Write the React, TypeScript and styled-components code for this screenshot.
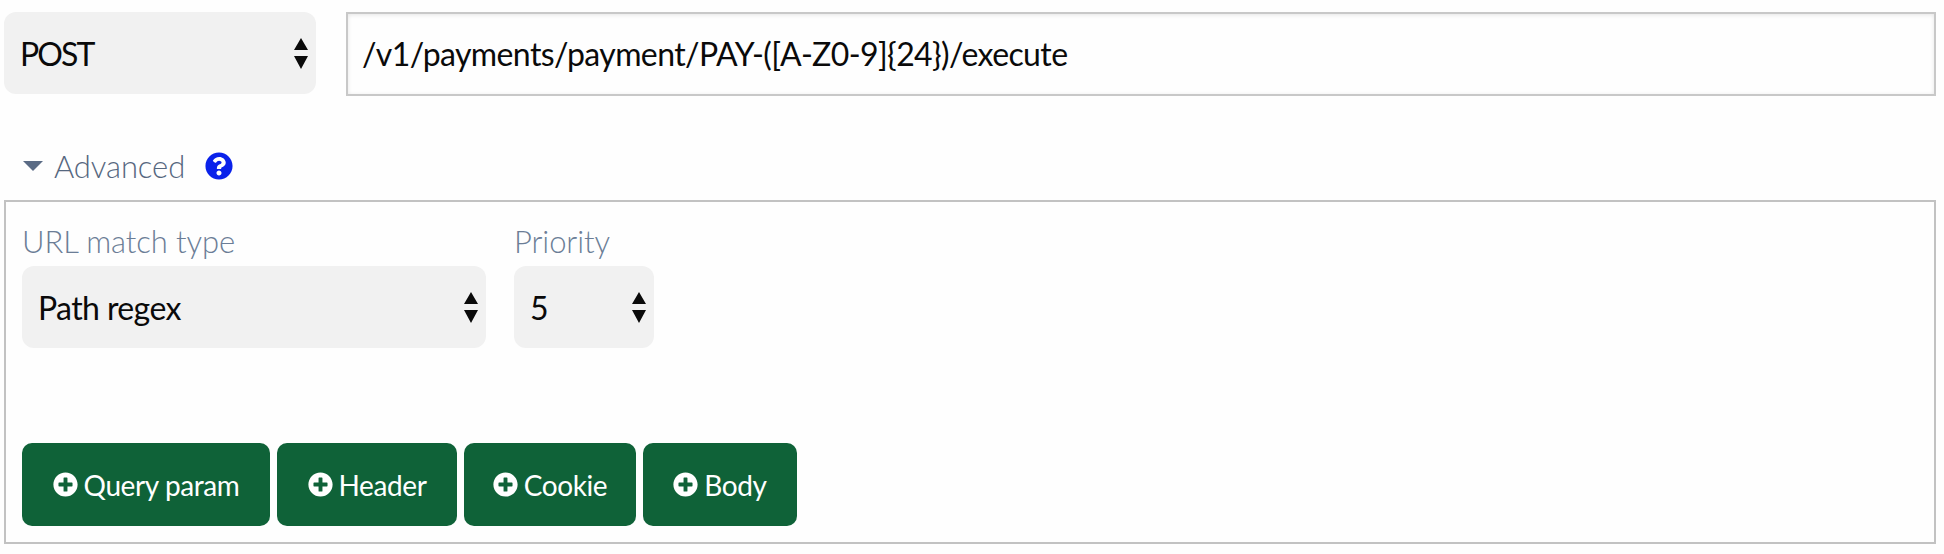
import styled, { createGlobalStyle } from "styled-components";

const GlobalStyle = createGlobalStyle`
  html, body {
    margin: 0;
    background: #fefefe;
  }
  body {
    font-family: "Lato", "Noto Sans", sans-serif;
  }
`;

const Page = styled.div`
  width: 1944px;
  height: 554px;
  box-sizing: border-box;
  padding: 12px 8px 0 4px;
`;

const TopRow = styled.div`
  display: flex;
  align-items: flex-start;
  gap: 30px;
`;

const SelectWrap = styled.div<{ $w: number }>`
  position: relative;
  width: ${(p) => p.$w}px;
  height: 82px;
  flex: none;
  svg {
    position: absolute;
    right: 7px;
    top: 26px;
    pointer-events: none;
  }
`;

const Select = styled.select<{ $spacing: number }>`
  appearance: none;
  width: 100%;
  height: 100%;
  border: none;
  outline: none;
  border-radius: 12px;
  background: #f1f1f1;
  color: #0a0a0a;
  font-family: inherit;
  font-size: 32px;
  letter-spacing: ${(p) => p.$spacing}px;
  padding: 0 0 0 16px;
`;

const UrlInput = styled.input`
  flex: 1;
  min-width: 0;
  height: 84px;
  box-sizing: border-box;
  border: 2px solid #c8c8c8;
  box-shadow: inset 0 1px 4px rgba(10, 10, 10, 0.1);
  background: #fefefe;
  outline: none;
  color: #0a0a0a;
  font-family: inherit;
  font-size: 32px;
  letter-spacing: -0.6px;
  padding: 0 16px 2px 14px;
`;

const Toggle = styled.div`
  display: flex;
  align-items: center;
  height: 40px;
  margin: 50px 0 14px 19px;
`;

const Caret = styled.span`
  width: 0;
  height: 0;
  border-left: 10px solid transparent;
  border-right: 10px solid transparent;
  border-top: 10px solid #5a6b85;
  margin-right: 11px;
`;

const ToggleText = styled.span`
  color: #56677f;
  font-size: 31px;
  font-weight: 300;
  letter-spacing: -0.1px;
  margin-right: 20px;
`;

const Panel = styled.div`
  box-sizing: border-box;
  height: 344px;
  border: 2px solid #c2c2c2;
  padding: 24px 16px 16px 16px;
  display: flex;
  flex-direction: column;
  justify-content: space-between;
`;

const Fields = styled.div`
  display: flex;
  gap: 28px;
`;

const Field = styled.div`
  display: flex;
  flex-direction: column;
`;

const Label = styled.label`
  color: #6b7d96;
  font-size: 31px;
  font-weight: 300;
  letter-spacing: -0.1px;
  line-height: 30px;
  margin-bottom: 10px;
`;

const Buttons = styled.div`
  display: flex;
  gap: 7px;
`;

const Button = styled.button<{ $w: number }>`
  display: flex;
  align-items: center;
  justify-content: center;
  gap: 6px;
  width: ${(p) => p.$w}px;
  height: 83px;
  border: none;
  border-radius: 10px;
  background: #0f6238;
  color: #ffffff;
  font-family: inherit;
  font-size: 28px;
  letter-spacing: -0.4px;
  padding: 0;
`;

const Arrows = () => (
  <svg width="16" height="31" viewBox="0 0 16 31">
    <path d="M8 0 L15 12 L1 12 Z M1 18 L15 18 L8 31 Z" fill="#0a0a0a" />
  </svg>
);

const HelpIcon = () => (
  <svg width="28" height="28" viewBox="0 0 512 512">
    <path
      fill="#0a22ea"
      d="M504 256c0 137-111 248-248 248S8 393 8 256 119 8 256 8s248 111 248 248zM262.700 90c-54.500 0-89.300 23-116.600 63.800-3.500 5.300-2.400 12.400 2.700 16.300l34.700 26.300c5.200 3.900 12.600 3 16.700-2.100 17.900-22.700 30.100-35.800 57.300-35.800 20.400 0 45.700 13.100 45.700 32.900 0 14.900-12.300 22.600-32.400 33.900-23.400 13.100-54.400 29.500-54.400 70.400V300c0 6.600 5.400 12 12 12h56c6.600 0 12-5.400 12-12v-1.300c0-28.400 82.900-29.500 82.900-106.300 0-57.800-60-102.400-116.600-102.400zM256 338c-25.400 0-46 20.600-46 46 0 25.400 20.600 46 46 46s46-20.600 46-46c0-25.400-20.600-46-46-46z"
    />
  </svg>
);

const PlusIcon = () => (
  <svg width="25" height="25" viewBox="0 0 512 512">
    <path
      fill="#ffffff"
      d="M256 8C119 8 8 119 8 256s111 248 248 248 248-111 248-248S393 8 256 8zm144 276c0 6.600-5.400 12-12 12h-92v92c0 6.600-5.400 12-12 12h-56c-6.600 0-12-5.400-12-12v-92h-92c-6.600 0-12-5.400-12-12v-56c0-6.600 5.400-12 12-12h92v-92c0-6.600 5.400-12 12-12h56c6.600 0 12 5.400 12 12v92h92c6.600 0 12 5.400 12 12v56z"
    />
  </svg>
);

const actions = [
  { label: "Query param", w: 248 },
  { label: "Header", w: 180 },
  { label: "Cookie", w: 172 },
  { label: "Body", w: 154 },
];

export default function App() {
  return (
    <Page>
      <GlobalStyle />
      <TopRow>
        <SelectWrap $w={312}>
          <Select $spacing={-1.9} defaultValue="POST">
            <option>GET</option>
            <option>POST</option>
          </Select>
          <Arrows />
        </SelectWrap>
        <UrlInput readOnly value="/v1/payments/payment/PAY-([A-Z0-9]{24})/execute" />
      </TopRow>
      <Toggle>
        <Caret />
        <ToggleText>Advanced</ToggleText>
        <HelpIcon />
      </Toggle>
      <Panel>
        <Fields>
          <Field>
            <Label>URL match type</Label>
            <SelectWrap $w={464}>
              <Select $spacing={-0.6} defaultValue="Path regex">
                <option>Path regex</option>
                <option>Path</option>
              </Select>
              <Arrows />
            </SelectWrap>
          </Field>
          <Field>
            <Label>Priority</Label>
            <SelectWrap $w={140}>
              <Select $spacing={0} defaultValue="5">
                <option>5</option>
              </Select>
              <Arrows />
            </SelectWrap>
          </Field>
        </Fields>
        <Buttons>
          {actions.map((a) => (
            <Button key={a.label} $w={a.w}>
              <PlusIcon />
              {a.label}
            </Button>
          ))}
        </Buttons>
      </Panel>
    </Page>
  );
}
